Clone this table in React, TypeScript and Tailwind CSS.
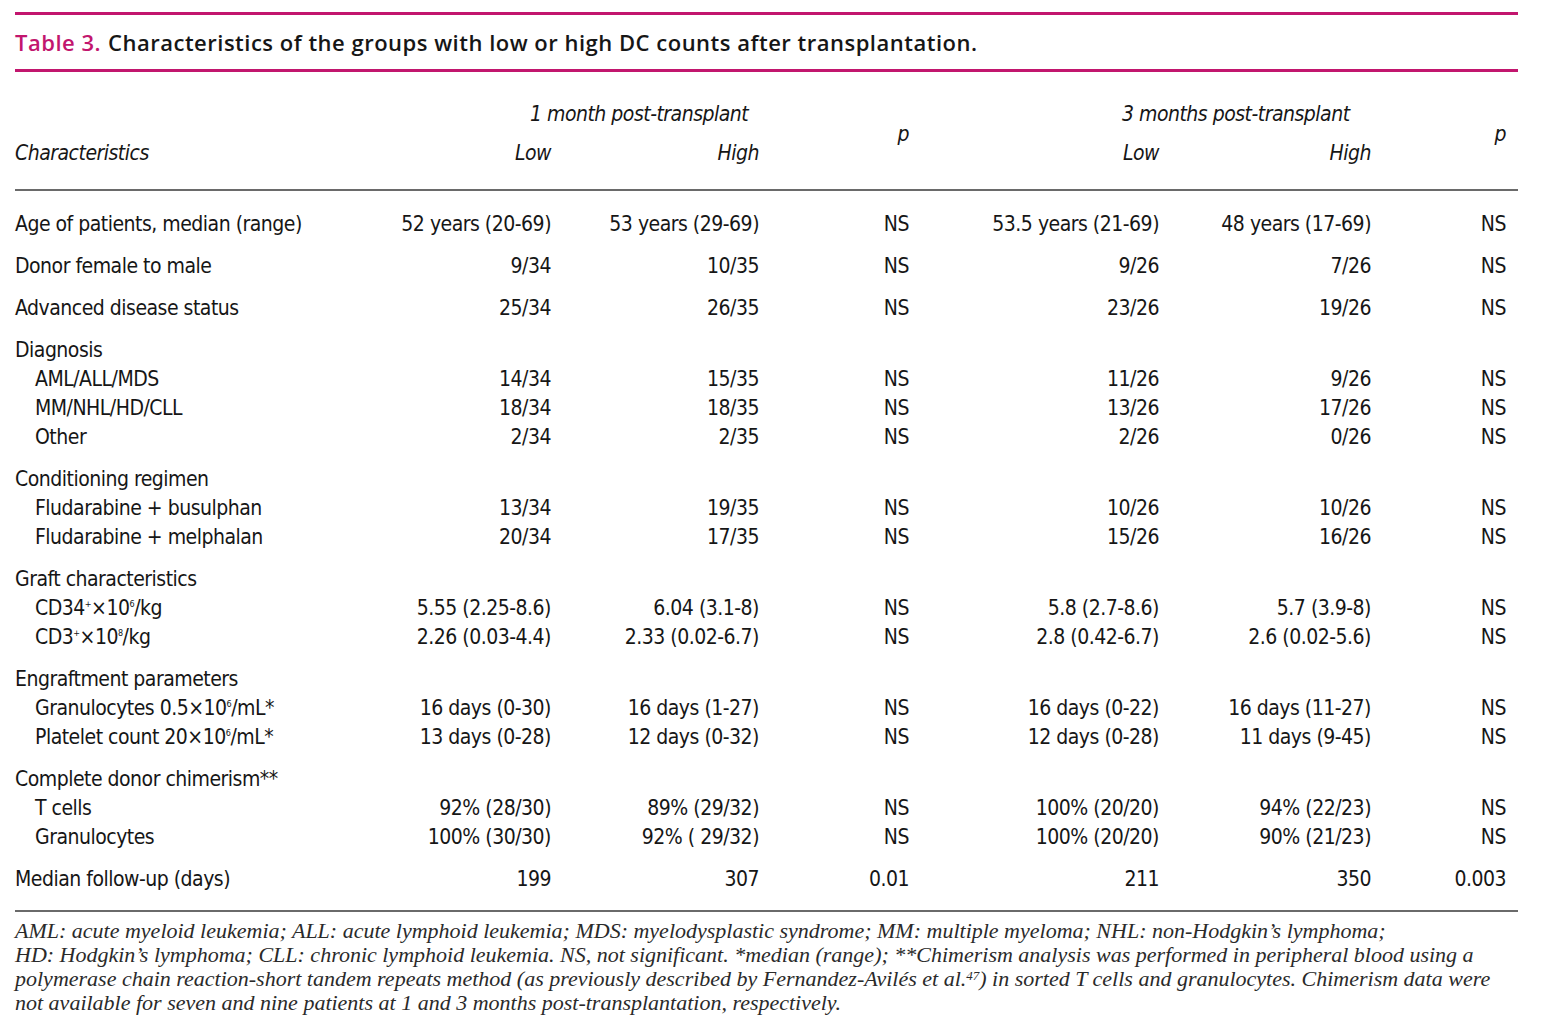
import React from 'react';

type Row = {
  label: string;
  indent?: boolean;
  cells?: React.ReactNode[];
};

type Group = Row[];

const narrow = "font-['DejaVu_Sans_Condensed','Liberation_Sans',sans-serif] tracking-[-0.5px]";

// small raised marks for CD34+ x 10^6 etc
const Sup = ({ children }: { children: React.ReactNode }) => (
  <sup className="text-[9px] leading-none align-top relative top-[6px]">{children}</sup>
);

const groups: Group[] = [
  [{ label: 'Age of patients, median (range)', cells: ['52 years (20-69)', '53 years (29-69)', 'NS', '53.5 years (21-69)', '48 years (17-69)', 'NS'] }],
  [{ label: 'Donor female to male', cells: ['9/34', '10/35', 'NS', '9/26', '7/26', 'NS'] }],
  [{ label: 'Advanced disease status', cells: ['25/34', '26/35', 'NS', '23/26', '19/26', 'NS'] }],
  [
    { label: 'Diagnosis' },
    { label: 'AML/ALL/MDS', indent: true, cells: ['14/34', '15/35', 'NS', '11/26', '9/26', 'NS'] },
    { label: 'MM/NHL/HD/CLL', indent: true, cells: ['18/34', '18/35', 'NS', '13/26', '17/26', 'NS'] },
    { label: 'Other', indent: true, cells: ['2/34', '2/35', 'NS', '2/26', '0/26', 'NS'] },
  ],
  [
    { label: 'Conditioning regimen' },
    { label: 'Fludarabine + busulphan', indent: true, cells: ['13/34', '19/35', 'NS', '10/26', '10/26', 'NS'] },
    { label: 'Fludarabine + melphalan', indent: true, cells: ['20/34', '17/35', 'NS', '15/26', '16/26', 'NS'] },
  ],
  [
    { label: 'Graft characteristics' },
    { label: 'cd34', indent: true, cells: ['5.55 (2.25-8.6)', '6.04 (3.1-8)', 'NS', '5.8 (2.7-8.6)', '5.7 (3.9-8)', 'NS'] },
    { label: 'cd3', indent: true, cells: ['2.26 (0.03-4.4)', '2.33 (0.02-6.7)', 'NS', '2.8 (0.42-6.7)', '2.6 (0.02-5.6)', 'NS'] },
  ],
  [
    { label: 'Engraftment parameters' },
    { label: 'gran', indent: true, cells: ['16 days (0-30)', '16 days (1-27)', 'NS', '16 days (0-22)', '16 days (11-27)', 'NS'] },
    { label: 'plt', indent: true, cells: ['13 days (0-28)', '12 days (0-32)', 'NS', '12 days (0-28)', '11 days (9-45)', 'NS'] },
  ],
  [
    { label: 'Complete donor chimerism**' },
    { label: 'T cells', indent: true, cells: ['92% (28/30)', '89% (29/32)', 'NS', '100% (20/20)', '94% (22/23)', 'NS'] },
    { label: 'Granulocytes', indent: true, cells: ['100% (30/30)', '92% ( 29/32)', 'NS', '100% (20/20)', '90% (21/23)', 'NS'] },
  ],
  [{ label: 'Median follow-up (days)', cells: ['199', '307', '0.01', '211', '350', '0.003'] }],
];

const renderLabel = (label: string) => {
  switch (label) {
    case 'cd34':
      return <>CD34<Sup>+</Sup>×10<Sup>6</Sup>/kg</>;
    case 'cd3':
      return <>CD3<Sup>+</Sup>×10<Sup>8</Sup>/kg</>;
    case 'gran':
      return <>Granulocytes 0.5×10<Sup>6</Sup>/mL*</>;
    case 'plt':
      return <>Platelet count 20×10<Sup>6</Sup>/mL*</>;
    default:
      return label;
  }
};

const cols = 'grid grid-cols-[385px_151px_208px_150px_250px_212px_135px]';

export default function App() {
  return (
    <div className="min-h-screen bg-white pl-[15px] pr-[30px] pt-[12px] text-[#161616]">
      {/* title block */}
      <div className="h-[3px] bg-[#c2166e]" />
      <div className="h-[54px] flex items-center font-['Open_Sans',sans-serif] text-[22px] font-semibold tracking-[0.5px]">
        <span className="text-[#c2166e]">Table 3.</span>
        <span className="ml-[7px]">Characteristics of the groups with low or high DC counts after transplantation.</span>
      </div>
      <div className="h-[3px] bg-[#c2166e]" />

      {/* header */}
      <div className={`${narrow} text-[21px] italic pt-[27px] pb-[21px]`}>
        <div className={`${cols} leading-[30px]`}>
          <div />
          <div className="col-span-2 pl-[130px] whitespace-nowrap">1 month post-transplant</div>
          <div className="row-span-2 self-center text-right">p</div>
          <div className="col-span-2 pl-[213px] whitespace-nowrap">3 months post-transplant</div>
          <div className="row-span-2 self-center text-right">p</div>
          <div className="mt-[9px]">Characteristics</div>
          <div className="mt-[9px] text-right">Low</div>
          <div className="mt-[9px] text-right">High</div>
          <div className="mt-[9px] text-right">Low</div>
          <div className="mt-[9px] text-right">High</div>
        </div>
      </div>
      <div className="h-[2px] bg-[#6a6a6a]" />

      {/* body */}
      <div className={`${narrow} text-[21px] leading-[29px] pt-[19px] pb-[16px] flex flex-col gap-[13px]`}>
        {groups.map((g, gi) => (
          <div key={gi}>
            {g.map((r, ri) => (
              <div key={ri} className={cols}>
                <div className={`whitespace-nowrap ${r.indent ? 'pl-[20px]' : ''}`}>{renderLabel(r.label)}</div>
                {(r.cells ?? ['', '', '', '', '', '']).map((c, ci) => (
                  <div key={ci} className="text-right whitespace-nowrap">{c}</div>
                ))}
              </div>
            ))}
          </div>
        ))}
      </div>
      <div className="h-[2px] bg-[#6a6a6a]" />

      {/* footnote */}
      <p className="mt-[7px] font-['Liberation_Serif',serif] italic text-[22px] leading-[24px] text-[#2a2a2a] whitespace-nowrap">
        AML: acute myeloid leukemia; ALL: acute lymphoid leukemia; MDS: myelodysplastic syndrome; MM: multiple myeloma; NHL: non-Hodgkin’s lymphoma;
        <br />
        HD: Hodgkin’s lymphoma; CLL: chronic lymphoid leukemia. NS, not significant. *median (range); **Chimerism analysis was performed in peripheral blood using a
        <br />
        polymerase chain reaction-short tandem repeats method (as previously described by Fernandez-Avilés et al.<sup className="text-[13px]">47</sup>) in sorted T cells and granulocytes. Chimerism data were
        <br />
        not available for seven and nine patients at 1 and 3 months post-transplantation, respectively.
      </p>
    </div>
  );
}
